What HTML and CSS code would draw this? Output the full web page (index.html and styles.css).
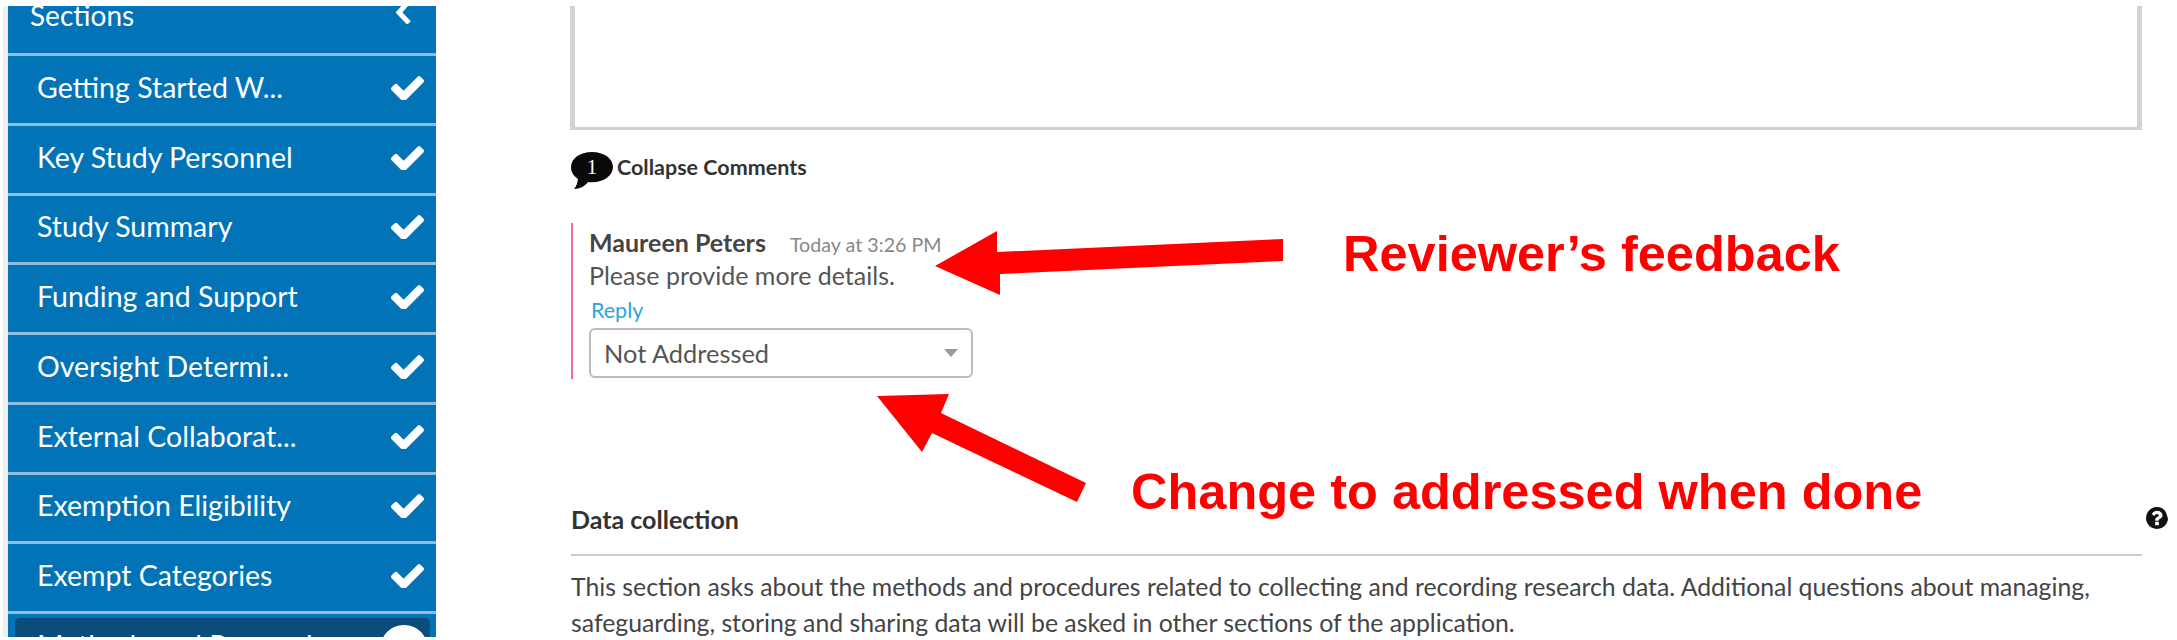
FILE: index.html
```html
<!DOCTYPE html>
<html lang="en">
<head>
<meta charset="utf-8">
<title>Comments</title>
<link rel="stylesheet" href="styles.css">
</head>
<body>
<div class="page">
  <nav class="sidebar">
    <div class="sections"><span>Sections</span><svg class="chev" viewBox="0 0 18 18"><path d="M14-5 4 6.500 14 17" fill="none" stroke="#fff" stroke-width="5"/></svg></div>
    <a class="item"><span>Getting Started W...</span><svg class="check" viewBox="121 270 1550 1150"><path d="M1671 566q0 40-28 68l-724 724-136 136q-28 28-68 28t-68-28l-136-136-362-362q-28-28-28-68t28-68l136-136q28-28 68-28t68 28l294 295 656-657q28-28 68-28t68 28l136 136q28 28 28 68z" fill="#fff"/></svg></a>
    <a class="item"><span>Key Study Personnel</span><svg class="check" viewBox="121 270 1550 1150"><path d="M1671 566q0 40-28 68l-724 724-136 136q-28 28-68 28t-68-28l-136-136-362-362q-28-28-28-68t28-68l136-136q28-28 68-28t68 28l294 295 656-657q28-28 68-28t68 28l136 136q28 28 28 68z" fill="#fff"/></svg></a>
    <a class="item"><span>Study Summary</span><svg class="check" viewBox="121 270 1550 1150"><path d="M1671 566q0 40-28 68l-724 724-136 136q-28 28-68 28t-68-28l-136-136-362-362q-28-28-28-68t28-68l136-136q28-28 68-28t68 28l294 295 656-657q28-28 68-28t68 28l136 136q28 28 28 68z" fill="#fff"/></svg></a>
    <a class="item"><span>Funding and Support</span><svg class="check" viewBox="121 270 1550 1150"><path d="M1671 566q0 40-28 68l-724 724-136 136q-28 28-68 28t-68-28l-136-136-362-362q-28-28-28-68t28-68l136-136q28-28 68-28t68 28l294 295 656-657q28-28 68-28t68 28l136 136q28 28 28 68z" fill="#fff"/></svg></a>
    <a class="item"><span>Oversight Determi...</span><svg class="check" viewBox="121 270 1550 1150"><path d="M1671 566q0 40-28 68l-724 724-136 136q-28 28-68 28t-68-28l-136-136-362-362q-28-28-28-68t28-68l136-136q28-28 68-28t68 28l294 295 656-657q28-28 68-28t68 28l136 136q28 28 28 68z" fill="#fff"/></svg></a>
    <a class="item"><span>External Collaborat...</span><svg class="check" viewBox="121 270 1550 1150"><path d="M1671 566q0 40-28 68l-724 724-136 136q-28 28-68 28t-68-28l-136-136-362-362q-28-28-28-68t28-68l136-136q28-28 68-28t68 28l294 295 656-657q28-28 68-28t68 28l136 136q28 28 28 68z" fill="#fff"/></svg></a>
    <a class="item"><span>Exemption Eligibility</span><svg class="check" viewBox="121 270 1550 1150"><path d="M1671 566q0 40-28 68l-724 724-136 136q-28 28-68 28t-68-28l-136-136-362-362q-28-28-28-68t28-68l136-136q28-28 68-28t68 28l294 295 656-657q28-28 68-28t68 28l136 136q28 28 28 68z" fill="#fff"/></svg></a>
    <a class="item"><span>Exempt Categories</span><svg class="check" viewBox="121 270 1550 1150"><path d="M1671 566q0 40-28 68l-724 724-136 136q-28 28-68 28t-68-28l-136-136-362-362q-28-28-28-68t28-68l136-136q28-28 68-28t68 28l294 295 656-657q28-28 68-28t68 28l136 136q28 28 28 68z" fill="#fff"/></svg></a>
    <div class="active-wrap"><a class="active"><span>Methods and Research</span><i class="dot"></i></a></div>
  </nav>
  <main class="main">
    <div class="textbox"></div>
    <div class="collapse">
      <span class="bubble"><svg viewBox="0 0 42 38"><path d="M21 0C9 0 0 6.500 0 15c0 5 2.500 9 7 12-.5 4-1.500 7-4 10 6 0 11-3 14-7 1.500.2 2.800.3 4 .3 12 0 21-6.800 21-15.300S33 0 21 0z" fill="#0a0a0a"/></svg><b>1</b></span>
      <span class="collapse-label">Collapse Comments</span>
    </div>
    <div class="comment">
      <div class="meta"><span class="author">Maureen Peters</span><span class="time">Today at 3:26 PM</span></div>
      <div class="body">Please provide more details.</div>
      <div class="reply">Reply</div>
      <div class="select"><span>Not Addressed</span><i class="caret"></i></div>
    </div>
    <div class="dc-head"><span>Data collection</span><svg class="help" viewBox="128 128 1536 1536"><path d="M1024 1376v-192q0-14-9-23t-23-9h-192q-14 0-23 9t-9 23v192q0 14 9 23t23 9h192q14 0 23-9t9-23zm256-672q0-88-55.500-163t-138.500-116-170-41q-243 0-371 213-15 24 8 42l132 100q7 6 19 6 16 0 25-12 53-68 86-92 34-24 86-24 48 0 85.500 26t37.500 59q0 38-20 61t-68 45q-63 28-115.500 86.500t-52.500 125.500v36q0 14 9 23t23 9h192q14 0 23-9t9-23q0-19 21.500-49.500t54.500-49.500q32-18 49-28.500t46-35 44.500-48 28-60.500 12.500-81zm384 192q0 209-103 385.500t-279.500 279.500-385.500 103-385.500-103-279.500-279.500-103-385.500 103-385.500 279.500-279.500 385.500-103 385.500 103 279.500 385.500 103 385.500z" fill="#111"/></svg></div>
    <p class="desc">This section asks about the methods and procedures related to collecting and recording research data. Additional questions about managing, safeguarding, storing and sharing data will be asked in other sections of the application.</p>
  </main>
</div>
<svg class="arrows" viewBox="0 0 2177 640">
  <polygon points="935,266 997,231 997,252 1283,239 1283,261 1000,274 1000,295" fill="#ff0000"/>
  <polygon points="877,396 949,394 941,413 1086,483 1077,502 932,433 922,452" fill="#ff0000"/>
</svg>
<div class="note note-a">Reviewer’s feedback</div>
<div class="note note-b">Change to addressed when done</div>
</body>
</html>
```
FILE: styles.css
```css
* { box-sizing: border-box; }
html, body { margin: 0; padding: 0; }
body { width: 2177px; height: 640px; overflow: hidden; background: #fff; position: relative; font-family: Lato, "Liberation Sans", sans-serif; color: #333; }
.page { display: flex; height: 640px; padding: 6px 0 3px 3px; }
.sidebar { width: 433px; flex: none; border-left: 5px solid #eee; display: flex; flex-direction: column; height: 631px; overflow: hidden; }
.sections { height: 47px; flex: none; background: #0273b7; color: #fff; display: flex; justify-content: space-between; font-size: 28px; line-height: 18px; padding: 0 23px 0 22px; overflow: hidden; }
.chev { width: 18px; height: 18px; }
.item { height: 69.750px; flex: none; background: #0273b7; color: #fff; display: flex; align-items: center; justify-content: space-between; font-size: 28.500px; padding: 0 12px 5px 29px; border-top: 3px solid #8dbedf; }
.check { width: 33px; height: 26px; }
.active-wrap { background: #0273b7; padding: 4px 6px 0 7px; flex: 1; border-top: 3px solid #8dbedf; }
.active { display: flex; justify-content: space-between; background: #0a4d7a; color: #fff; font-size: 28.500px; line-height: 34px; height: 60px; padding: 10px 2px 0 22px; border-radius: 5px 5px 0 0; }
.dot { width: 48px; height: 48px; border-radius: 50%; background: #fff; margin-top: -3px; }
.main { flex: none; width: 1606px; margin-left: 135px; display: flex; flex-direction: column; }
.textbox { height: 124px; flex: none; margin-left: -1px; border-style: solid; border-color: #d2d2d2; border-width: 0 5px 3px 5px; width: 1572px; }
.collapse { display: flex; align-items: flex-start; margin-top: 22px; height: 38px; flex: none; }
.bubble { position: relative; width: 42px; height: 38px; flex: none; }
.bubble svg { width: 42px; height: 38px; display: block; }
.bubble b { position: absolute; left: 0; top: 0; width: 42px; text-align: center; color: #fff; font: 400 21px/30px "Liberation Serif", serif; }
.collapse-label { font-size: 21.500px; line-height: 30px; font-weight: 700; margin-left: 4px; }
.comment { margin-top: 33px; border-left: 2px solid #e8708c; padding-left: 16px; height: 156px; flex: none; }
.meta { display: flex; align-items: baseline; height: 35px; padding-top: 3px; line-height: 32px; }
.author { font-size: 25px; font-weight: 700; color: #444; }
.time { font-size: 19.700px; color: #888; margin-left: 24px; }
.body { font-size: 25px; line-height: 32px; margin-top: 1px; color: #555; }
.reply { font-size: 21.500px; line-height: 30px; color: #2ba6dd; padding-left: 2px; margin-top: 4px; }
.select { margin-top: 3px; width: 384px; height: 50px; border: 2px solid #bbb; border-radius: 6px; display: flex; align-items: center; justify-content: space-between; font-size: 25.400px; color: #555; padding: 0 13px 0 13px; }
.caret { width: 0; height: 0; border: 7px solid transparent; border-top: 8px solid #999; border-bottom: 0; }
.dc-head { display: flex; justify-content: space-between; align-items: flex-start; margin-top: 125px; border-bottom: 2px solid #ccc; padding: 0 0 20px 0; font-size: 25px; line-height: 30px; font-weight: 700; width: 1571px; flex: none; }
.help { width: 22px; height: 22px; margin: 3px -26px 0 0; flex: none; }
.desc { margin: 13px 0 0; font-size: 24.800px; line-height: 36px; color: #444; width: 1571px; }
.arrows { position: absolute; left: 0; top: 0; width: 2177px; height: 640px; pointer-events: none; }
.note { position: absolute; color: #ff0000; font-family: "Liberation Sans", Arial, sans-serif; font-weight: 700; font-size: 50.500px; line-height: 60px; white-space: nowrap; }
.note-a { left: 1343px; top: 224px; }
.note-b { left: 1131px; top: 462px; }
```
